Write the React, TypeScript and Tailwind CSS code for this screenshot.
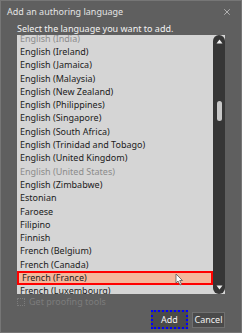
import { X } from "lucide-react";

const languages: { name: string; dim?: boolean }[] = [
  { name: "English (India)", dim: true },
  { name: "English (Ireland)" },
  { name: "English (Jamaica)" },
  { name: "English (Malaysia)" },
  { name: "English (New Zealand)" },
  { name: "English (Philippines)" },
  { name: "English (Singapore)" },
  { name: "English (South Africa)" },
  { name: "English (Trinidad and Tobago)" },
  { name: "English (United Kingdom)" },
  { name: "English (United States)", dim: true },
  { name: "English (Zimbabwe)" },
  { name: "Estonian" },
  { name: "Faroese" },
  { name: "Filipino" },
  { name: "Finnish" },
  { name: "French (Belgium)" },
  { name: "French (Canada)" },
  { name: "French (France)" },
  { name: "French (Luxembourg)" },
];

const selected = "French (France)";

export default function App() {
  return (
    <div
      className="relative flex h-[333px] w-[242px] flex-col border border-[#767676] bg-[#5f5f5f] text-[9px] leading-[12px] text-[#ececec]"
      style={{ fontFamily: '"Noto Sans", "Open Sans", sans-serif' }}
    >
      {/* title bar */}
      <div className="flex h-[20px] shrink-0 items-center justify-between pl-[6px] pr-[9px] pt-[1px]">
        <span className="text-[#e4e4e4]">Add an authoring language</span>
        <X size={10} strokeWidth={1.5} className="text-[#e0e0e0]" />
      </div>

      <div className="flex flex-col px-[16px]">
        <p className="mt-[1px] h-[13px] leading-[13px] text-[#f2f2f2]">
          Select the language you want to add.
        </p>

        {/* list box */}
        <div className="flex h-[259px] w-[208px] shrink-0 bg-[#d5d5d5]">
          <div className="flex-1 overflow-hidden">
            <div className="-mt-[3px]">
              {languages.map((lang) => {
                const isSel = lang.name === selected;
                return (
                  <div
                    key={lang.name}
                    className={`flex h-[13.3px] items-center whitespace-nowrap pl-[3px] ${
                      isSel ? "border-2 border-[#ff0000] bg-[#f4b79b] pl-[1px]" : ""
                    } ${lang.dim ? "text-[#8c8c8c]" : "text-[#1c1c1c]"}`}
                  >
                    {lang.name}
                  </div>
                );
              })}
            </div>
          </div>
          {/* scrollbar */}
          <div className="flex w-[12px] flex-col items-center rounded-full bg-[#363636] py-[3px]">
            <svg width="7" height="5" viewBox="0 0 7 5" className="mt-[1px]">
              <path d="M3.5 0.5 L6.5 4.5 L0.5 4.5 Z" fill="#f0f0f0" />
            </svg>
            <div className="mt-[57px] h-[20px] w-[5px] rounded-full bg-[#c8c8c8]" />
            <div className="flex-1" />
            <svg width="7" height="5" viewBox="0 0 7 5" className="mb-[1px]">
              <path d="M0.5 0.5 L6.5 0.5 L3.5 4.5 Z" fill="#f0f0f0" />
            </svg>
          </div>
        </div>

        {/* proofing checkbox */}
        <div className="mt-[3px] flex h-[9px] items-center gap-[4px] text-[#7c7c7c]">
          <span className="h-[8px] w-[8px] rounded-[1px] border border-dotted border-[#7c7c7c]" />
          <span className="leading-[9px]">Get proofing tools</span>
        </div>

        {/* buttons */}
        <div className="mt-[4px] flex h-[19px] items-center justify-end gap-[4px]">
          <button
            type="button"
            className="flex h-[19px] w-[37px] items-center justify-center border-2 border-dotted border-[#0000ff] bg-[#4a4a4a] leading-[12px] text-[#f2f2f2]"
          >
            Add
          </button>
          <button
            type="button"
            className="flex h-[16px] w-[33px] items-center justify-center border border-[#707070] bg-[#4a4a4a] leading-[12px] text-[#f2f2f2]"
          >
            Cancel
          </button>
        </div>
      </div>

      {/* mouse cursor */}
      <svg
        width="9"
        height="13"
        viewBox="0 0 9 13"
        className="absolute left-[174px] top-[272px]"
      >
        <path d="M1 1 L1 10 L3 8 L5 12 L6.5 11.3 L4.7 7.5 L7.5 7.5 Z" fill="#ffffff" stroke="#555" strokeWidth="0.8" />
      </svg>
    </div>
  );
}
